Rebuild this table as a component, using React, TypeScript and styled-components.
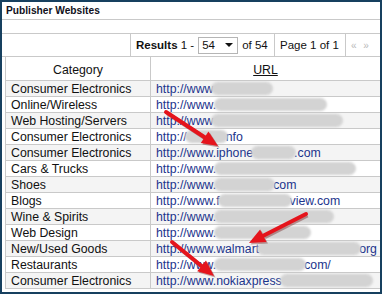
import styled, { createGlobalStyle } from 'styled-components'

const GlobalStyle = createGlobalStyle`
  html, body {
    margin: 0;
    padding: 0;
    background: #ffffff;
  }
  * {
    box-sizing: border-box;
  }
`

type UrlPart = string | number

interface Row {
  category: string
  url: UrlPart[]
}

const rows: Row[] = [
  { category: 'Consumer Electronics', url: ['http://www', 62] },
  { category: 'Online/Wireless', url: ['http://www.', 113] },
  { category: 'Web Hosting/Servers', url: ['http://www', 132] },
  { category: 'Consumer Electronics', url: ['http://', 43, 'nfo'] },
  { category: 'Consumer Electronics', url: ['http://www.iphone', 45, '.com'] },
  { category: 'Cars & Trucks', url: ['http://www.', 142] },
  { category: 'Shoes', url: ['http://www.', 61, 'com'] },
  { category: 'Blogs', url: ['http://www.f', 74, 'view.com'] },
  { category: 'Wine & Spirits', url: ['http://www.', 120] },
  { category: 'Web Design', url: ['http://www.', 97] },
  { category: 'New/Used Goods', url: ['http://www.walmart', 104, 'org'] },
  { category: 'Restaurants', url: ['http://www.', 92, 'com/'] },
  { category: 'Consumer Electronics', url: ['http://www.nokiaxpress', 93] }
]

const Frame = styled.div`
  position: relative;
  width: 382px;
  height: 294px;
  border: 2px solid #17405f;
  background: #ffffff;
  overflow: hidden;
  font-family: 'Liberation Sans', Arial, sans-serif;
  color: #111111;
`

const TitleBar = styled.div`
  height: 18px;
  padding-left: 4px;
  border-bottom: 1px solid #c9c9c9;
  font-size: 10.2px;
  font-weight: bold;
  line-height: 18px;
  color: #101020;
`

const Spacer = styled.div`
  height: 14px;
  border-bottom: 1px solid #c9c9c9;
`

const Toolbar = styled.div`
  display: flex;
  height: 23px;
  border-bottom: 1px solid #c9c9c9;
  font-size: 11.5px;
`

const ToolbarFill = styled.div`
  width: 128px;
`

const ToolCell = styled.div<{ $width: number }>`
  display: flex;
  align-items: center;
  gap: 3px;
  width: ${({ $width }) => $width}px;
  padding-left: 5px;
  border-left: 1px solid #c9c9c9;
  white-space: nowrap;
`

const Bold = styled.span`
  font-weight: bold;
`

const Select = styled.div`
  display: flex;
  align-items: center;
  justify-content: space-between;
  width: 40px;
  height: 17px;
  margin: 0 1px;
  padding: 0 4px 0 3px;
  border: 1px solid #b5b5b5;
  background: #ffffff;
  font-size: 11.5px;
`

const Caret = styled.span`
  width: 0;
  height: 0;
  border-left: 4px solid transparent;
  border-right: 4px solid transparent;
  border-top: 4px solid #111111;
`

const Pager = styled.span`
  color: #b9b9b9;
  font-size: 10px;
  letter-spacing: 2px;
`

const Table = styled.div`
  margin-left: 3px;
  border-left: 1px solid #c9c9c9;
  font-size: 12.3px;
`

const GridRow = styled.div<{ $striped?: boolean; $header?: boolean }>`
  display: grid;
  grid-template-columns: 144px 1fr;
  height: ${({ $header }) => ($header ? 24 : 16)}px;
  border-bottom: 1px solid #c9c9c9;
  background: ${({ $striped }) => ($striped ? '#f4f4f4' : '#ffffff')};
`

const Cell = styled.div<{ $header?: boolean }>`
  display: flex;
  align-items: center;
  justify-content: ${({ $header }) => ($header ? 'center' : 'flex-start')};
  padding-left: ${({ $header }) => ($header ? 0 : 5)}px;
  padding-top: ${({ $header }) => ($header ? 2 : 0)}px;
  white-space: nowrap;
  overflow: hidden;
  & + & {
    border-left: 1px solid #c9c9c9;
  }
`

const HeaderLink = styled.span`
  text-decoration: underline;
  color: #111111;
`

const Url = styled.span`
  display: flex;
  align-items: center;
  color: #1c348c;
`

const Blur = styled.span<{ $width: number }>`
  display: inline-block;
  width: ${({ $width }) => $width}px;
  height: 13px;
  margin: 0 -2px;
  border-radius: 7px;
  background: #d3d3d3;
  filter: blur(0.9px);
`

const Overlay = styled.svg`
  position: absolute;
  top: -2px;
  left: -2px;
  pointer-events: none;
`

const arrows = [
  { x1: 166, y1: 112, x2: 218, y2: 146 },
  { x1: 306, y1: 214, x2: 249, y2: 243 },
  { x1: 172, y1: 242, x2: 214, y2: 276 }
]

const Arrow = ({ x1, y1, x2, y2 }: { x1: number; y1: number; x2: number; y2: number }) => {
  const angle = Math.atan2(y2 - y1, x2 - x1)
  const len = 16
  const half = 7
  const bx = x2 - Math.cos(angle) * len
  const by = y2 - Math.sin(angle) * len
  const px = -Math.sin(angle) * half
  const py = Math.cos(angle) * half
  const head = `${x2},${y2} ${bx + px},${by + py} ${bx - px},${by - py}`
  return (
    <g>
      <g transform="translate(1.5 1.5)" opacity="0.35">
        <line x1={x1} y1={y1} x2={bx} y2={by} stroke="#600" strokeWidth="4" />
        <polygon points={head} fill="#600" />
      </g>
      <line x1={x1} y1={y1} x2={bx} y2={by} stroke="#e5141c" strokeWidth="4" strokeLinecap="round" />
      <polygon points={head} fill="#e5141c" />
    </g>
  )
}

const App = () => (
  <>
    <GlobalStyle />
    <Frame>
      <TitleBar>Publisher Websites</TitleBar>
      <Spacer />
      <Toolbar>
        <ToolbarFill />
        <ToolCell $width={144}>
          <span>
            <Bold>Results</Bold> 1 -
          </span>
          <Select>
            54
            <Caret />
          </Select>
          <span>of 54</span>
        </ToolCell>
        <ToolCell $width={71}>Page 1 of 1</ToolCell>
        <ToolCell $width={35}>
          <Pager>« »</Pager>
        </ToolCell>
      </Toolbar>
      <Table>
        <GridRow $header>
          <Cell $header>Category</Cell>
          <Cell $header>
            <HeaderLink>URL</HeaderLink>
          </Cell>
        </GridRow>
        {rows.map((row, i) => (
          <GridRow key={i} $striped={i % 2 === 0}>
            <Cell>{row.category}</Cell>
            <Cell>
              <Url>
                {row.url.map((part, j) =>
                  typeof part === 'number' ? <Blur key={j} $width={part} /> : <span key={j}>{part}</span>
                )}
              </Url>
            </Cell>
          </GridRow>
        ))}
      </Table>
      <Overlay width={382} height={294} viewBox="0 0 382 294">
        {arrows.map((a, i) => (
          <Arrow key={i} {...a} />
        ))}
      </Overlay>
    </Frame>
  </>
)

export default App
